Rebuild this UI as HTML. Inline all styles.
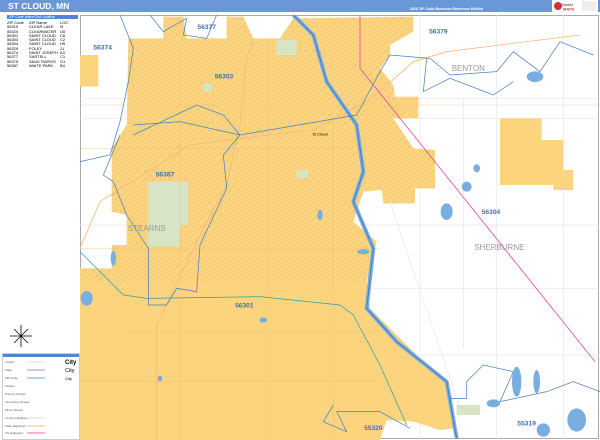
<!DOCTYPE html>
<html><head><meta charset="utf-8"><style>
html,body{margin:0;padding:0;width:600px;height:440px;overflow:hidden;background:#fff;font-family:"Liberation Sans",sans-serif}
#hdr{position:absolute;left:0;top:0;width:600px;height:12px;background:#6a97d8}
#hdr .t{position:absolute;left:8px;top:1px;color:#fff;font-weight:bold;font-size:8.5px}
#hdr .e{position:absolute;left:410px;top:7px;color:#fff;font-weight:bold;font-size:3.6px}
#logo{position:absolute;left:552px;top:0;width:46px;height:13px;background:#fff}
#idx{position:absolute;left:7px;top:15px;width:71px}
#idx .h{background:#4f86d6;color:#fff;font-size:3.5px;height:4px;line-height:4px;padding-left:2px}
#idx table{border-collapse:collapse;font-size:4px;line-height:4.3px;margin-top:2px}
#idx td{padding:0;white-space:nowrap}
#leg{position:absolute;left:2px;top:353px;width:76px;height:85px;border:1px solid #ccc;font-size:3px;color:#555}
#leg .h{background:#4f86d6;height:3px}
.row{position:absolute;left:2px}
</style></head><body>
<div id="hdr"><div class="t">ST CLOUD, MN</div><div class="e">2026 ZIP Code Business Reference Edition</div></div>
<div id="logo"><svg width="46" height="13"><circle cx="6" cy="6" r="4" fill="#c33"/><text x="10" y="6" font-size="3.5" fill="#333" font-family="Liberation Sans">Market</text><text x="11" y="10.5" font-size="4" fill="#c33" font-weight="bold" font-family="Liberation Sans">MAPS</text><rect x="30" y="1" width="14" height="10" fill="#eee"/></svg></div>
<div id="idx"><div class="h">ZIP Code Index/Grid Location</div>
<table>
<tr><td style="width:22px">ZIP Code</td><td style="width:31px">ZIP Name</td><td>LOC</td></tr>
<tr><td>55319</td><td>CLEAR LAKE</td><td>I5</td></tr>
<tr><td>55320</td><td>CLEARWATER</td><td>G6</td></tr>
<tr><td>56301</td><td>SAINT CLOUD</td><td>C6</td></tr>
<tr><td>56303</td><td>SAINT CLOUD</td><td>C2</td></tr>
<tr><td>56304</td><td>SAINT CLOUD</td><td>H5</td></tr>
<tr><td>56329</td><td>FOLEY</td><td>J1</td></tr>
<tr><td>56374</td><td>SAINT JOSEPH</td><td>A3</td></tr>
<tr><td>56377</td><td>SARTELL</td><td>C1</td></tr>
<tr><td>56379</td><td>SAUK RAPIDS</td><td>G1</td></tr>
<tr><td>56387</td><td>WAITE PARK</td><td>B4</td></tr>
</table></div>
<svg style="position:absolute;left:8px;top:322px" width="26" height="28" viewBox="0 0 26 28"><g stroke="#000" stroke-width="0.8"><line x1="13" y1="3" x2="13" y2="25"/><line x1="2" y1="14" x2="24" y2="14"/><line x1="6" y1="7" x2="20" y2="21"/><line x1="20" y1="7" x2="6" y2="21"/></g></svg>
<div id="leg"><div class="h"></div>
<div class="row" style="top:6px">County</div><div class="row" style="top:14px">State</div><div class="row" style="top:22px">ZIP Code</div><div class="row" style="top:30px">Streets</div><div class="row" style="top:38px">Primary Streets</div><div class="row" style="top:46px">Secondary Streets</div><div class="row" style="top:54px">Minor Streets</div><div class="row" style="top:62px">County Highways</div><div class="row" style="top:70px">State Highways</div><div class="row" style="top:77px">US Highways</div>
<div style="position:absolute;left:62px;top:6px;font-size:6px;color:#000;font-weight:bold">City</div>
<div style="position:absolute;left:62px;top:14px;font-size:5.5px;color:#000">City</div>
<div style="position:absolute;left:62px;top:22px;font-size:4px;color:#000">City</div>
<svg style="position:absolute;left:22px;top:0" width="22" height="85"><g stroke-width="1"><line x1="2" y1="8" x2="20" y2="8" stroke="#ddd"/><line x1="2" y1="16" x2="20" y2="16" stroke="#999"/><line x1="2" y1="24" x2="20" y2="24" stroke="#6fa6e0"/><line x1="2" y1="64" x2="20" y2="64" stroke="#ddd"/><line x1="2" y1="72" x2="20" y2="72" stroke="#f6c27a"/><line x1="2" y1="79" x2="20" y2="79" stroke="#f06ab6"/></g></svg>
</div>
<div style="position:absolute;left:80px;top:15px;width:519px;height:424px;border:1px solid #aaa;box-sizing:border-box"></div>
<svg style="position:absolute;left:80px;top:15px" width="520" height="425" viewBox="0 0 1560 1275">
<defs><pattern id="st" width="24" height="24" patternUnits="userSpaceOnUse"><path d="M0 12 H10 M14 0 V8 M18 16 V24" stroke="#b8a070" stroke-width="2" opacity="0.45"/></pattern>
<clipPath id="yc"><path d="M145 70 L250 70 L250 5 L310 5 L320 70 L440 70 L440 5 L490 5 L520 70 L600 70 L640 10 L1000 5 L1000 50 L930 90 L930 120 L900 160 L940 210 L945 245 L1015 245 L1015 310 L940 310 L1000 400 L1065 405 L1065 520 L1005 520 L1005 565 L910 565 L905 525 L850 530 L820 620 L890 680 L860 800 L870 880 L950 960 L1110 1120 L1120 1240 L1080 1245 L1000 1220 L920 1215 L900 1275 L0 1275 L0 760 L95 760 L95 690 L140 690 L140 600 L95 590 L95 400 L140 330 Z"/></clipPath></defs>
<g stroke="#e6e6e6" stroke-width="2" fill="none">
<path d="M0 250 H1560 M0 310 H1560 M0 630 H1560 M0 820 H1560 M0 1020 H1560 M1020 0 V1275 M1250 0 V1275 M1450 0 V1275 M930 560 L1140 1180 M1150 250 V1000"/>
</g>
<path fill="#fdd47e" d="M145 70 L250 70 L250 5 L310 5 L320 70 L440 70 L440 5 L490 5 L520 70 L600 70 L640 10 L1000 5 L1000 50 L930 90 L930 120 L900 160 L940 210 L945 245 L1015 245 L1015 310 L940 310 L1000 400 L1065 405 L1065 520 L1005 520 L1005 565 L910 565 L905 525 L850 530 L820 620 L890 680 L860 800 L870 880 L950 960 L1110 1120 L1120 1240 L1080 1245 L1000 1220 L920 1215 L900 1275 L0 1275 L0 760 L95 760 L95 690 L140 690 L140 600 L95 590 L95 400 L140 330 Z"/>
<path fill="#fdd47e" d="M0 120 H55 V215 H0 Z M1260 310 H1385 V375 H1450 V465 H1480 V525 H1420 V510 H1260 Z"/>
<rect x="0" y="0" width="1100" height="800" fill="url(#st)" clip-path="url(#yc)"/>
<path fill="#d7e4c6" d="M205 500 H325 V630 H300 V695 H205 Z M590 75 H650 V120 H590 Z M1130 1170 H1200 V1200 H1130 Z M650 465 H685 V490 H650 Z M370 205 H395 V230 H370 Z"/>
<g stroke="#e8b96a" stroke-width="1.5" fill="none" opacity="0.6">
<path d="M0 270 H1560"/><path d="M0 400 H820"/><path d="M0 700 H900"/><path d="M140 950 H900"/><path d="M300 100 V1275 M560 70 V1275 M760 300 V1275"/><path d="M0 1100 H900"/>
</g>
<g stroke="#f6b97a" stroke-width="2.5" fill="none">
<path d="M0 700 L60 560 L330 390 L480 370 L700 345 L870 255 L1000 140 L1100 110 L1500 60"/><path d="M230 1275 L230 930 L360 660 L440 510 L480 330 L500 130 L520 70"/>
</g>
<path d="M640 0 L700 60 L740 200 L830 330 L850 470 L820 560 L880 700 L860 880 L950 980 L1100 1100 L1130 1270" stroke="#7aaee0" stroke-width="12" fill="none"/>
<path d="M640 0 L700 60 L740 200 L830 330 L850 470 L820 560 L880 700 L860 880 L950 980 L1100 1100 L1130 1270" stroke="#3e75bb" stroke-width="2.5" fill="none"/>
<path d="M840 0 L840 160 L1545 1040" stroke="#e84ca8" stroke-width="2.5" fill="none"/>
<g stroke="#4a7fc4" stroke-width="2.2" fill="none">
<path d="M210 0 L250 50 L320 10 L310 60 L380 70 L410 0"/>
<path d="M120 0 L160 100 L145 200 L120 320 L90 420 L0 440"/>
<path d="M160 360 L350 270 L430 300 L480 360 L430 420 L440 520 L360 690 L350 830 L290 820 L260 870 L205 870 L205 700 L140 600 L100 500 L70 480 L120 360"/>
<path d="M160 330 L300 320 L480 360 L830 300 L900 170 L930 120 L1050 130 L1110 180 L1250 170 L1300 110 L1380 170 L1440 80 L1540 120"/>
<path d="M1040 130 L1030 230 L1110 190 L1240 240 L1300 200"/>
<path d="M1560 1130 L1480 1100 L1400 1130 L1260 1160 L1300 1070 L1210 1050 L1160 1100 L1160 1150 L1110 1150"/>
<path d="M760 1170 L730 1220 L800 1250 L770 1190 L900 1190 L990 1240"/>
</g>
<path d="M0 710 L130 840 L200 850 L540 845 L780 870 L820 900 L900 1050 L980 1230" stroke="#2f9fb0" stroke-width="2.2" fill="none"/>
<g fill="#7aaee0">
<ellipse cx="20" cy="850" rx="18" ry="22"/><ellipse cx="550" cy="915" rx="12" ry="8"/><ellipse cx="850" cy="710" rx="18" ry="8"/><ellipse cx="1100" cy="590" rx="18" ry="25"/><ellipse cx="1160" cy="515" rx="15" ry="15"/><ellipse cx="1365" cy="185" rx="25" ry="16"/><ellipse cx="1310" cy="1100" rx="14" ry="45"/><ellipse cx="1370" cy="1100" rx="10" ry="35"/><ellipse cx="1490" cy="1215" rx="28" ry="35"/><ellipse cx="1390" cy="1245" rx="20" ry="20"/><ellipse cx="1240" cy="1165" rx="20" ry="12"/><ellipse cx="1190" cy="460" rx="10" ry="12"/><ellipse cx="720" cy="600" rx="8" ry="16"/><ellipse cx="100" cy="730" rx="8" ry="22"/><ellipse cx="240" cy="1090" rx="7" ry="9"/>
</g>
<g font-family="Liberation Sans" font-weight="bold" fill="#3d6fb6" font-size="20" text-anchor="middle">
<text x="380" y="42">56377</text><text x="1075" y="55">56379</text><text x="68" y="104">56374</text><text x="432" y="190">56303</text><text x="255" y="484">56387</text><text x="1233" y="597">56304</text><text x="493" y="877">56301</text><text x="880" y="1245">55320</text><text x="1340" y="1232">55319</text>
</g>
<g font-family="Liberation Sans" fill="#9a9a9a" font-size="24" text-anchor="middle">
<text x="1165" y="168">BENTON</text><text x="200" y="648">STEARNS</text><text x="1258" y="705">SHERBURNE</text>
</g>
<text x="720" y="362" font-family="Liberation Sans" font-size="12" fill="#000" text-anchor="middle">St Cloud</text>
</svg>
</body></html>
